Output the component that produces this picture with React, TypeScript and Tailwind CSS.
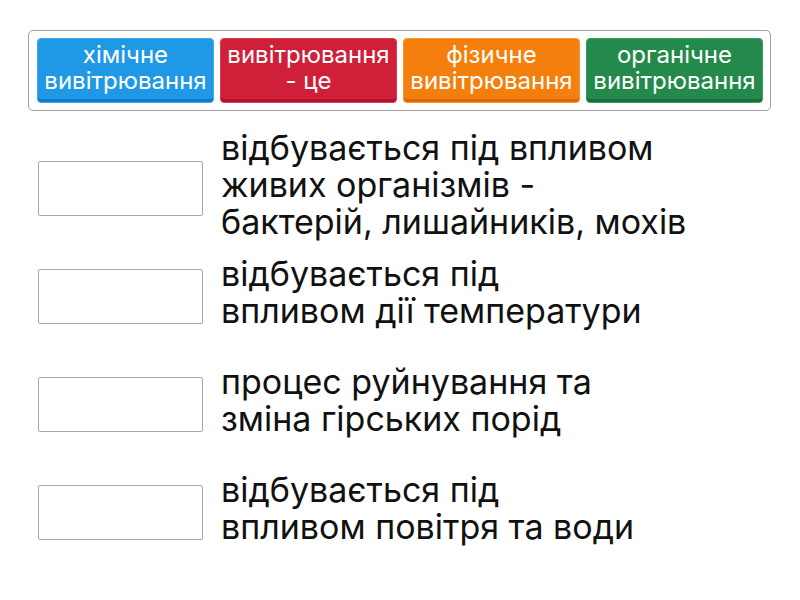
import React from "react";

const tiles = [
  { lines: ["хімічне", "вивітрювання"], cls: "bg-[#1f99e6] border-[#3aa9f0] shadow-[inset_0_-3px_0_#1479c4]" },
  { lines: ["вивітрювання", "- це"], cls: "bg-[#d01f38] border-[#de3a52] shadow-[inset_0_-3px_0_#ad1429]" },
  { lines: ["фізичне", "вивітрювання"], cls: "bg-[#f57f0c] border-[#fb9530] shadow-[inset_0_-3px_0_#d8680a]" },
  { lines: ["органічне", "вивітрювання"], cls: "bg-[#238a4b] border-[#34a062] shadow-[inset_0_-3px_0_#1b6e3b]" },
];

const rows = [
  ["відбувається під впливом", "живих організмів -", "бактерій, лишайників, мохів"],
  ["відбувається під", "впливом дії температури"],
  ["процес руйнування та", "зміна гірських порід"],
  ["відбувається під", "впливом повітря та води"],
];

export default function App() {
  return (
    <div className="w-[800px] h-[600px] bg-white overflow-hidden" style={{ fontFamily: "Inter, 'Noto Sans', sans-serif" }}>
      <div className="pt-[30px] pl-[28px]">
        <div className="w-[743px] h-[81px] border border-[#a0a0a0] rounded-[5px] flex items-center gap-[6px] pl-[8px]">
          {tiles.map((t, i) => (
            <div
              key={i}
              className={`w-[177px] h-[65px] rounded-[4px] border flex items-center justify-center text-white text-[24px] leading-[26px] pb-[5px] ${t.cls}`}
            >
              <p className="text-center whitespace-nowrap">
                {t.lines[0]}
                <br />
                {t.lines[1]}
              </p>
            </div>
          ))}
        </div>
      </div>
      <div className="pt-[23px]">
        {rows.map((r, i) => (
          <div key={i} className="h-[108px] flex items-center pl-[38px]">
            <div className="w-[165px] h-[55px] border border-[#a8a8a8] rounded-[2px] shrink-0" />
            <p className="ml-[18px] mb-[8px] text-[34px] leading-[37px] text-[#111] whitespace-nowrap">
              {r.map((l, j) => (
                <React.Fragment key={j}>
                  {j > 0 && <br />}
                  {l}
                </React.Fragment>
              ))}
            </p>
          </div>
        ))}
      </div>
    </div>
  );
}
